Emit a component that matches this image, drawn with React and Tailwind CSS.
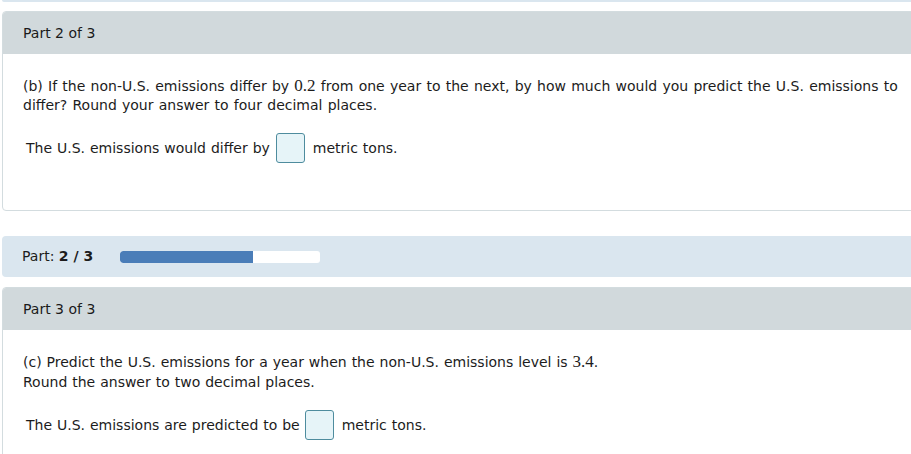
import React from 'react';

function AnswerBox() {
  return (
    <span className="inline-block w-[29px] h-[30px] border border-[#4e8c9e] bg-[#e6f4f8] rounded-[3px]" />
  );
}

function Num({ children }) {
  return <span className="font-['Liberation_Serif'] text-[17px]">{children}</span>;
}

function PartCard({ title, children, bodyClass }) {
  return (
    <div className="ml-[2px] border border-[#d3dcdf] rounded-[4px] overflow-hidden">
      <div className="h-[42px] bg-[#d1d9dc] pl-[20px] flex items-center text-[14px] text-[#1a1a1a]">
        {title}
      </div>
      <div className={bodyClass}>{children}</div>
    </div>
  );
}

export default function App() {
  return (
    <div className="w-[911px] h-[454px] overflow-hidden bg-white text-[14px] text-[#1c1c1c] font-['DejaVu_Sans']">
      <div className="w-[930px]">
        <div className="h-[2px] bg-[#dae6ef] ml-[2px] rounded-b-[2px]" />

        <div className="mt-[9px]">
          <PartCard title="Part 2 of 3" bodyClass="pl-[20px] pt-[22px] pb-[47px]">
            <p className="leading-[19px] w-[888px] [word-spacing:0.8px]">
              (b) If the non-U.S. emissions differ by <Num>0.2</Num> from one year to the next, by how much would you predict the U.S. emissions to differ? Round your answer to four decimal places.
            </p>
            <div className="mt-[18px] ml-[3px] flex items-center [word-spacing:0.5px]">
              <span>The U.S. emissions would differ by</span>
              <span className="ml-[6px] mr-[8px] flex"><AnswerBox /></span>
              <span>metric tons.</span>
            </div>
          </PartCard>
        </div>

        <div className="mt-[25px] ml-[2px] h-[41px] bg-[#dae6ef] rounded-[4px] flex items-center pl-[20px]">
          <span>Part: <b>2 / 3</b></span>
          <div className="ml-[27px] w-[200px] h-[12px] bg-white rounded-[3px] overflow-hidden">
            <div className="h-full bg-[#4a7db8] rounded-l-[3px]" style={{ width: `${(2 / 3) * 100}%` }} />
          </div>
        </div>

        <div className="mt-[10px]">
          <PartCard title="Part 3 of 3" bodyClass="pl-[20px] pt-[22px] pb-[30px]">
            <p className="leading-[20px] [word-spacing:0.5px]">
              (c) Predict the U.S. emissions for a year when the non-U.S. emissions level is <Num>3.4</Num>.
              <br />
              Round the answer to two decimal places.
            </p>
            <div className="mt-[18px] ml-[3px] flex items-center [word-spacing:0.5px]">
              <span>The U.S. emissions are predicted to be</span>
              <span className="ml-[5px] mr-[8px] flex"><AnswerBox /></span>
              <span>metric tons.</span>
            </div>
          </PartCard>
        </div>
      </div>
    </div>
  );
}
